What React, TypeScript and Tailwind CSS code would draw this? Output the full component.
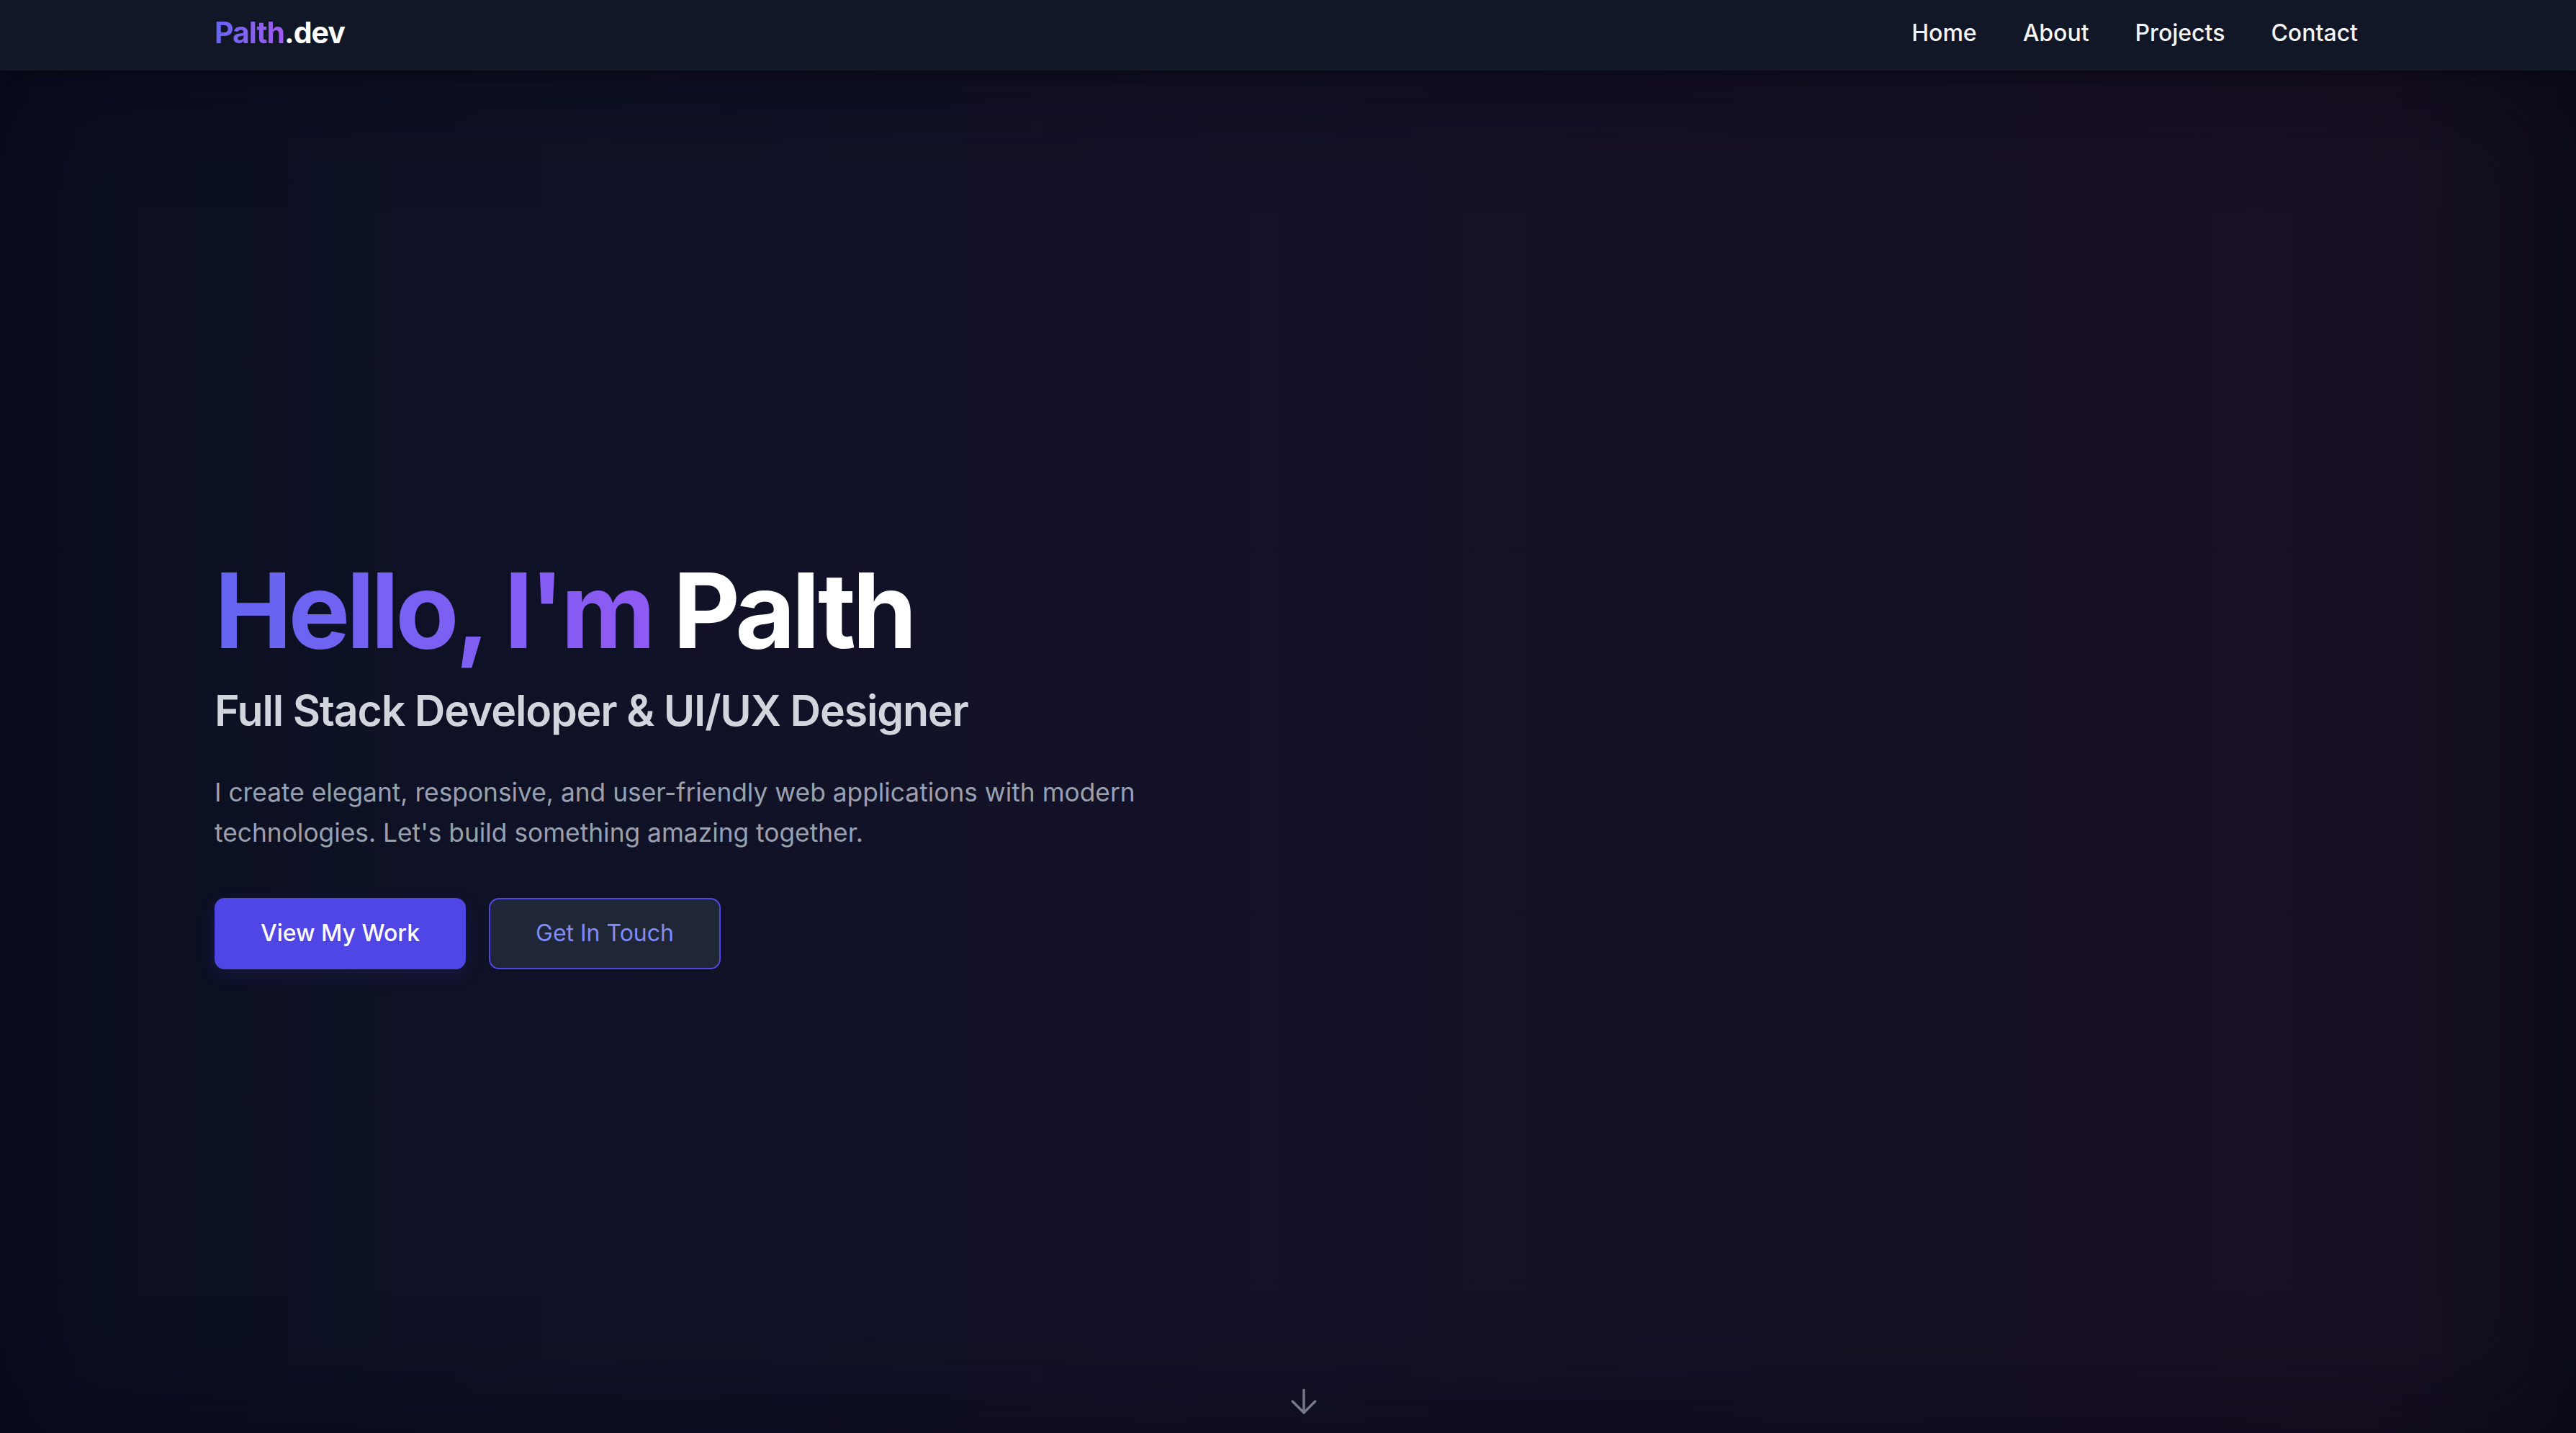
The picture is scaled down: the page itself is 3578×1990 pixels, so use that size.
import { ArrowDown } from 'lucide-react';

const navLinks = ['Home', 'About', 'Projects', 'Contact'];

const Navbar = () => (
  <nav className="h-[98px] bg-[#111726] shadow-[0_4px_12px_rgba(0,0,0,0.35)] relative z-10">
    <div className="h-full pb-[6px] pl-[298px] pr-[303px] flex items-center justify-between">
      <a href="#home" className="text-[41px] font-bold tracking-tight">
        <span className="bg-linear-to-r from-[#6366f1] to-[#a259f2] bg-clip-text text-transparent">Palth</span>
        <span className="text-white">.dev</span>
      </a>
      <div className="flex items-center gap-[64px]">
        {navLinks.map((link) => (
          <a key={link} href={`#${link.toLowerCase()}`} className="text-[32px] font-medium text-gray-100">
            {link}
          </a>
        ))}
      </div>
    </div>
  </nav>
);

const Hero = () => (
  <section
    id="home"
    className="relative h-[1892px] pt-[34px] flex items-center bg-[linear-gradient(90deg,#0b0f21_0%,#0f1226_20%,#131128_45%,#161025_70%,#181022_92%,#100e1c_100%)]"
  >
    {/* soft vignette round the edges */}
    <div className="absolute inset-0 pointer-events-none shadow-[inset_0_0_160px_rgba(6,6,16,0.55)]" />

    <div className="relative px-[298px] w-full">
      <h1 className="text-[144px] leading-none font-bold tracking-[-0.035em]">
        <span className="bg-linear-to-r from-[#6366f1] to-[#8f59f4] bg-clip-text text-transparent">Hello, I'm</span>{' '}
        <span className="text-white">Palth</span>
      </h1>
      <h2 className="mt-[32px] text-[59px] leading-[1.2] font-semibold tracking-[-0.02em] text-gray-300">
        Full Stack Developer &amp; UI/UX Designer
      </h2>
      <p className="mt-[50px] max-w-[1320px] text-[35.3px] leading-[56px] text-gray-400">
        I create elegant, responsive, and user-friendly web applications with modern technologies. Let's build
        something amazing together.
      </p>
      <div className="mt-[62px] flex items-center gap-[32px]">
        <a
          href="#projects"
          className="h-[99px] px-[64px] flex items-center rounded-[14px] bg-[#4f46e5] text-white text-[32px] font-medium shadow-[0_8px_24px_rgba(79,70,229,0.15)]"
        >
          View My Work
        </a>
        <a
          href="#contact"
          className="h-[99px] px-[63px] flex items-center rounded-[14px] border-2 border-[#4f46e5] bg-[#1f2736] text-[#818cf8] text-[32px]"
        >
          Get In Touch
        </a>
      </div>
    </div>

    <div className="absolute bottom-[17px] left-1/2 w-[44px] flex justify-center text-[#767a8a]">
      <ArrowDown className="w-[54px] h-[54px] shrink-0" strokeWidth={1.5} />
    </div>
  </section>
);

export default function App() {
  return (
    <div className="min-h-screen bg-[#0f0f22] font-[Inter,sans-serif]">
      <Navbar />
      <Hero />
    </div>
  );
}
